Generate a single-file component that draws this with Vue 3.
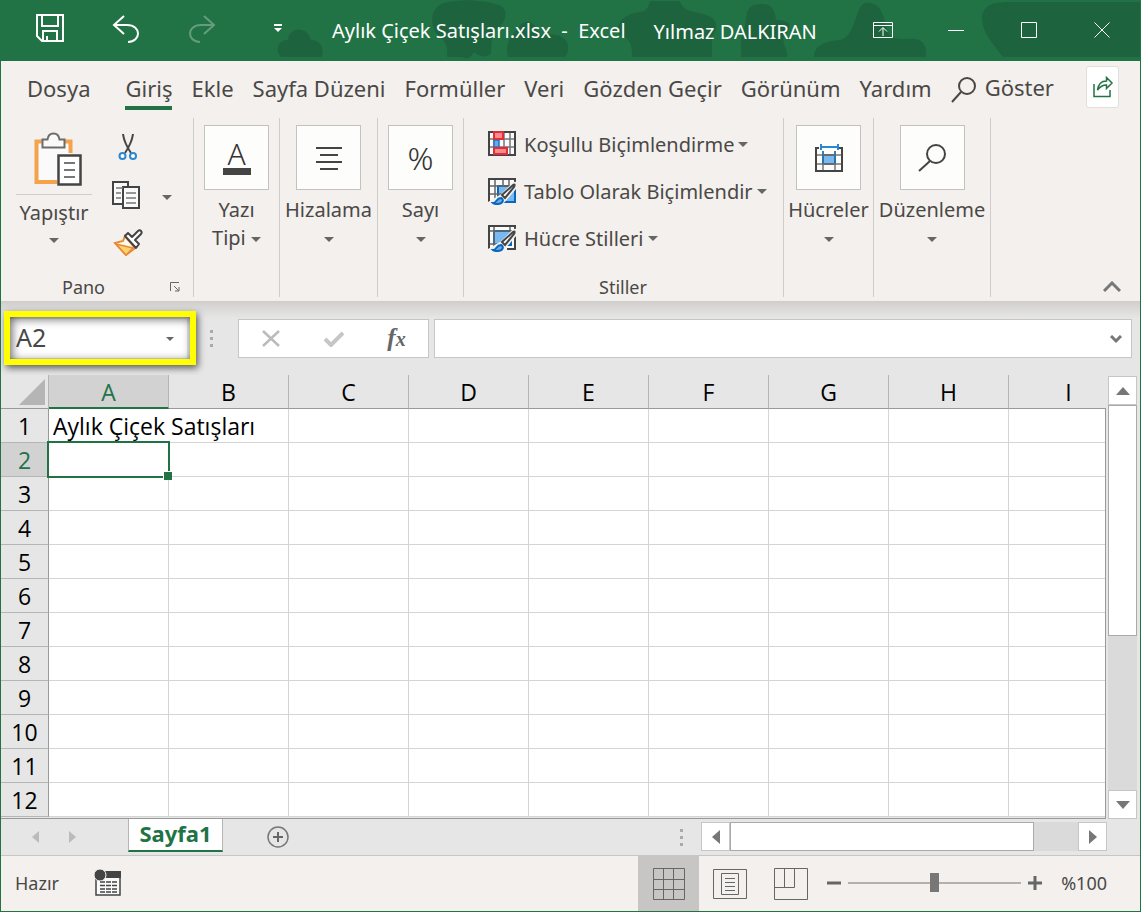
<script setup>
import { ref } from 'vue'

const tabs = ['Dosya', 'Giriş', 'Ekle', 'Sayfa Düzeni', 'Formüller', 'Veri', 'Gözden Geçir', 'Görünüm', 'Yardım']
const activeTab = ref('Giriş')
const columns = ['A', 'B', 'C', 'D', 'E', 'F', 'G', 'H', 'I']
const rows = Array.from({ length: 12 }, (_, i) => i + 1)
const cells = { A1: 'Aylık Çiçek Satışları' }
const selectedColumn = ref('A')
const selectedRow = ref(2)
const formula = ref('')
const zoom = ref(100)

function select(column, row) {
  selectedColumn.value = column
  selectedRow.value = row
}
</script>

<template>
  <div class="window">
    <header class="titlebar">
      <svg class="pattern" width="1141" height="61" viewBox="0 0 1141 61" aria-hidden="true">
        <path d="M281 57c-6-6-4-17 7-17 1-14 20-14 23 0 11 0 14 11 10 17zM447 57c1-9-1-15-8-21-8-6-12-27 5-33 15-5 45-3 57 3 8 5 4 17-3 22-8 7-6 18-7 25-4 6-13 3-17-1-3 6-7 8-12 5zM508 57c-3-11 1-21 10-28 4-11 18-10 21 6 13-2 30 0 29 13 0 4-1 7-3 9zM632 57c0-12-1-17-10-21-10-5-3-21 17-24 6 0 9-3 11-11h30c3 11 14 10 26 14 12 4 13 12 6 22v20zM741 57c1-8-2-13 2-24 4-9 1-25 11-28 17-4 21 4 22 15 15 0 17 6 9 15-5 8 4 15 2 22zM814 57c0-12 12-16 26-17 16-3 15-34 25-37 16-2 19 13 22 27 4 12 13 8 29 9 10 2 11 12 10 18zM1003 57c-7-9-19-22-21-36-1-15 9-19 28-19h131v55z" />
      </svg>
      <nav class="quick" aria-label="Hızlı Erişim">
        <button aria-label="Kaydet"><svg width="30" height="30" viewBox="0 0 30 30"><path d="M2 2h26v26H7l-5-5zM7 2v11h16V2M8 28V18h14v10M12 23v5" /></svg></button>
        <button aria-label="Geri Al"><svg width="28" height="30" viewBox="0 0 28 30"><path d="M12 3 2 12l10 9M2 12h13c15 0 14 17 1 17" /></svg></button>
        <button class="faded" aria-label="Yinele"><svg width="28" height="30" viewBox="0 0 28 30"><path d="m16 3 10 9-10 9M26 12H13C-2 12-1 29 12 29" /></svg></button>
        <button aria-label="Özelleştir"><svg width="8" height="10" viewBox="0 0 8 10"><path d="M0 2h8" /><path class="solid" d="M0 5h8L4 9z" /></svg></button>
      </nav>
      <h1>Aylık Çiçek Satışları.xlsx&nbsp; -&nbsp; Excel</h1>
      <span class="user">Yılmaz DALKIRAN</span>
      <div class="controls">
        <button aria-label="Şerit Görüntüleme"><svg width="20" height="16" viewBox="0 0 20 16"><path d="M.5.5h19v15H.5zM.5 3.500h19M10 14V6M6 9.500l4-4 4 4" /></svg></button>
        <button aria-label="Simge Durumuna Küçült"><svg width="16" height="16" viewBox="0 0 16 16"><path d="M0 8.500h16" /></svg></button>
        <button aria-label="Ekranı Kapla"><svg width="16" height="16" viewBox="0 0 16 16"><path d="M.5.5h15v15H.5z" /></svg></button>
        <button aria-label="Kapat"><svg width="16" height="16" viewBox="0 0 16 16"><path d="m.5.5 15 15m0-15-15 15" /></svg></button>
      </div>
    </header>

    <nav class="tabs" aria-label="Şerit sekmeleri">
      <button v-for="tab in tabs" :key="tab" :class="{ active: tab === activeTab }" @click="activeTab = tab">{{ tab }}</button>
      <button class="tell"><svg width="26" height="28" viewBox="0 0 26 28"><circle cx="16" cy="10" r="8" /><path d="M10 16 1 26" /></svg>Göster</button>
      <button class="share" aria-label="Paylaş"><svg width="22" height="22" viewBox="0 0 22 22"><path d="M2 8v12.500h16V14M5.500 14c1-7 4-9 9-9V1.500L20 7l-5.500 5.500V9c-4 0-6 1-9 5z" /></svg></button>
    </nav>

    <section class="ribbon">
      <div class="group clipboard">
        <button class="paste">
          <svg width="60" height="56" viewBox="0 0 60 56">
            <path fill="#fafafa" d="M13 10h34v40H13z" /><path d="M19 10.500h-6.500V51H33M40 10.500h6.500V22" stroke="#f4a34c" stroke-width="4" fill="none" />
            <path d="M18.500 16.500V8.500h5c1-8 11-8 12 0h5v8z" stroke="#6e6c6a" stroke-width="2" fill="#fafafa" />
            <path d="M34.500 24.500h22v29h-22z" stroke="#444" stroke-width="2.500" fill="#fff" /><path d="M40 32h11M40 39h11M40 46h11" stroke="#777" stroke-width="2" />
          </svg>
          <span class="paste-label">Yapıştır</span><i class="caret"></i>
        </button>
        <div class="tools">
          <button aria-label="Kes"><svg width="20" height="30" viewBox="0 0 20 30"><path d="M5 2c1 8 4 13 8 19M15 2c-1 8-4 13-8 19" stroke="#444" stroke-width="2" fill="none" /><g fill="#fff" stroke="#2b88d0" stroke-width="2"><circle cx="4.500" cy="24" r="3" /><circle cx="15" cy="24" r="3" /></g></svg></button>
          <button class="copy" aria-label="Kopyala"><svg width="34" height="30" viewBox="0 0 34 30"><g fill="#fafafa" stroke="#444" stroke-width="2"><path d="M12 24H2V2h15v5" /><path d="M12 7h16v21H12z" /></g><path d="M5 8h7M5 13h5M5 18h5M15 13h10M15 18h10M15 23h10" stroke="#777" stroke-width="1.500" /></svg></button>
          <button aria-label="Biçim Boyacısı"><svg width="30" height="28" viewBox="0 0 30 28"><path d="m12 7 10 12-9 7L2 14l8-2z" fill="#fffaf0" stroke="#e98a38" stroke-width="2" /><path d="m3 15 17 4-7 7z" fill="#ffd36b" stroke="#e98a38" stroke-width="1.500" /><path d="m12 7 3-3 4 4 6-6c2-2 5 1 3 3l-6 6 4 4-3 4z" fill="#fff" stroke="#444" stroke-width="2" stroke-linejoin="round" /></svg></button>
        </div>
        <button class="more" aria-label="Kopyalama seçenekleri"><i class="caret"></i></button>
        <footer>Pano<button class="launcher" aria-label="Pano ayarları"><svg width="10" height="10" viewBox="0 0 10 10"><path d="M.5 9V.5H9M4 4l4.500 4.500M9 5v4H5" /></svg></button></footer>
      </div>

      <button class="group font"><span class="tile letter"><span>A</span></span><span>Yazı<br />Tipi <i class="caret"></i></span></button>
      <button class="group align"><span class="tile"><svg width="26" height="26" viewBox="0 0 26 26"><path d="M0 3h26M4 10h18M0 17h26M4 24h18" /></svg></span><span>Hizalama</span><span><i class="caret"></i></span></button>
      <button class="group number"><span class="tile percent">%</span><span>Sayı</span><span><i class="caret"></i></span></button>

      <div class="group styles">
        <button>
          <svg width="28" height="28" viewBox="0 0 28 28"><path fill="#fafafa" d="M1 1h26v23H1z" /><path d="M6 1v23M16 1v23M22 1v23M1 8h26M1 16h26" stroke="#777" stroke-width="1.500" /><path d="M1 1h26v23H1z" fill="none" stroke="#444" stroke-width="2" /><path d="M6 9h5v7H6z" fill="#64acec" stroke="#2673c0" stroke-width="1.500" /><path d="M6 1h9v7H6zM6 17h13v6H6z" fill="#ff8790" stroke="#df2f36" stroke-width="2" /></svg>
          Koşullu Biçimlendirme <i class="caret"></i>
        </button>
        <button>
          <svg width="28" height="28" viewBox="0 0 28 28"><path fill="#fafafa" d="M1 1h26v23H1z" /><path d="M10 8h17v16H10z" fill="#79b9f1" stroke="#0867bb" stroke-width="2" /><path d="M7 1v23M15 1v8M21 1v8M1 8h26M1 16h13" stroke="#666" stroke-width="1.500" /><path d="M1 25V1h26v6" fill="none" stroke="#444" stroke-width="2" /><path d="M14 18 26 6c2-1 3 1 1 3L17 21l-4 4-9-1z" fill="#fff" stroke="#f3f0ed" stroke-width="4" /><path d="M14 17 25 7c2-1 2 0 1 2L17 20z" fill="#fff" stroke="#444" stroke-width="2" /><path d="M5 25c4 0 3-5 8-5 4 2 1 6-3 6-2 0-4 0-5-1z" fill="#64acec" stroke="#0867bb" stroke-width="2" /></svg>
          Tablo Olarak Biçimlendir <i class="caret"></i>
        </button>
        <button>
          <svg width="28" height="28" viewBox="0 0 28 28"><path fill="#fafafa" d="M1 1h26v23H1z" /><path d="M6 6h17v14H6z" fill="#79b9f1" stroke="#0867bb" stroke-width="2" /><path d="M6 1v23M22 1v5M1 6h26M1 19h10" stroke="#666" stroke-width="1.500" /><path d="M1 25V1h26v23H19" fill="none" stroke="#444" stroke-width="2" /><path d="M14 18 26 6c2-1 3 1 1 3L17 21l-4 4-9-1z" fill="#fff" stroke="#f3f0ed" stroke-width="4" /><path d="M14 17 25 7c2-1 2 0 1 2L17 20z" fill="#fff" stroke="#444" stroke-width="2" /><path d="M5 25c4 0 3-5 8-5 4 2 1 6-3 6-2 0-4 0-5-1z" fill="#64acec" stroke="#0867bb" stroke-width="2" /></svg>
          Hücre Stilleri <i class="caret"></i>
        </button>
        <footer>Stiller</footer>
      </div>

      <button class="group cellgroup"><span class="tile"><svg width="28" height="28" viewBox="0 0 28 28"><path d="M8 11h12v9H8z" fill="#79b9f1" /><path d="M1 11h26M1 20h26" stroke="#777" stroke-width="1.500" /><path d="M8 7v20M20 7v20" stroke="#777" stroke-width="1.500" /><path d="M8 7v13M20 7v13" stroke="#1d75bd" stroke-width="1.500" /><path d="M4 4H1v23h26V4h-3" stroke-width="2" /><path d="M6 3h17M6 0v6M23 0v6" stroke="#2b88d0" stroke-width="2" /></svg></span><span>Hücreler</span><span><i class="caret"></i></span></button>
      <button class="group editing"><span class="tile"><svg width="28" height="28" viewBox="0 0 28 28"><circle cx="18" cy="10" r="9" /><path d="M12 17 1 27" /></svg></span><span>Düzenleme</span><span><i class="caret"></i></span></button>
      <button class="collapse" aria-label="Şeridi Daralt"><svg width="18" height="12" viewBox="0 0 18 12"><path d="m1 10 8-8 8 8" /></svg></button>
    </section>

    <section class="formula-bar">
      <div class="namebox">
        <input :value="selectedColumn + selectedRow" aria-label="Ad Kutusu" readonly />
        <button aria-label="Adlar"><i class="caret small"></i></button>
        <div class="highlight"></div>
      </div>
      <div class="dots"><i></i><i></i><i></i></div>
      <div class="entry">
        <button aria-label="İptal"><svg width="18" height="17" viewBox="0 0 18 17"><path d="m1 1 16 15m0-15L1 16" stroke="#bbb" stroke-width="2.500" /></svg></button>
        <button aria-label="Gir"><svg width="20" height="16" viewBox="0 0 20 16"><path d="m1 8 6 6L19 2" stroke="#c6c6c6" stroke-width="4" /></svg></button>
        <button class="fx" aria-label="İşlev Ekle">f<small>x</small></button>
      </div>
      <div class="formula">
        <input v-model="formula" aria-label="Formül Çubuğu" />
        <button aria-label="Formül çubuğunu genişlet"><svg width="12" height="9" viewBox="0 0 12 9"><path d="m1 1 5 5 5-5" stroke="#777" stroke-width="3" /></svg></button>
      </div>
    </section>

    <main class="workspace">
      <div class="sheet">
        <table>
          <colgroup><col class="row-col" /><col v-for="c in columns" :key="c" /></colgroup>
          <thead>
            <tr>
              <th class="corner"><svg width="26" height="26" viewBox="0 0 26 26"><path d="M26 0v26H0z" fill="#b5b5b5" /></svg></th>
              <th v-for="c in columns" :key="c" scope="col" :class="{ current: c === selectedColumn }">{{ c }}</th>
            </tr>
          </thead>
          <tbody>
            <tr v-for="r in rows" :key="r">
              <th scope="row" :class="{ current: r === selectedRow }">{{ r }}</th>
              <td v-for="c in columns" :key="c" :class="{ spill: cells[c + r] }" @click="select(c, r)">
                {{ cells[c + r] }}
                <div v-if="c === selectedColumn && r === selectedRow" class="selection"></div>
              </td>
            </tr>
          </tbody>
        </table>
      </div>
      <div class="vscroll">
        <button aria-label="Yukarı"><svg width="14" height="8" viewBox="0 0 14 8"><path d="M0 8h14L7 0z" fill="#777" /></svg></button>
        <div class="vthumb"></div>
        <button aria-label="Aşağı"><svg width="14" height="8" viewBox="0 0 14 8"><path d="M0 0h14L7 8z" fill="#777" /></svg></button>
      </div>
    </main>

    <section class="sheetbar">
      <div class="sheet-nav">
        <button aria-label="Önceki sayfa"><svg width="7" height="12" viewBox="0 0 7 12"><path d="M7 0v12L0 6z" fill="#bbb" /></svg></button>
        <button aria-label="Sonraki sayfa"><svg width="7" height="12" viewBox="0 0 7 12"><path d="M0 0v12l7-6z" fill="#bbb" /></svg></button>
      </div>
      <button class="sheet-tab">Sayfa1</button>
      <button class="add" aria-label="Yeni sayfa"><svg width="24" height="24" viewBox="0 0 24 24"><circle cx="12" cy="12" r="10" stroke="#777" stroke-width="1.500" /><path d="M12 7v10M7 12h10" stroke="#666" stroke-width="2" /></svg></button>
      <div class="dots"><i></i><i></i><i></i></div>
      <div class="hscroll">
        <button aria-label="Sola"><svg width="8" height="14" viewBox="0 0 8 14"><path d="M8 0v14L0 7z" fill="#777" /></svg></button>
        <div class="hthumb"></div>
        <button aria-label="Sağa"><svg width="8" height="14" viewBox="0 0 8 14"><path d="M0 0v14l8-7z" fill="#777" /></svg></button>
      </div>
    </section>

    <footer class="status">
      <span class="ready">Hazır</span>
      <button class="macro" aria-label="Makro kaydet"><svg width="28" height="28" viewBox="0 0 28 28"><path d="M2 8v18h24V3H9" fill="#fafafa" stroke="#444" stroke-width="1.500" /><path d="M12 2h15v7H12z" fill="#444" /><circle cx="6" cy="6" r="6" fill="#444" stroke="#f3f0ed" /><path d="M6 13h17M6 16.500h17M6 20h17M6 23h17" stroke="#444" stroke-width="1.500" stroke-dasharray="5 1" /></svg></button>
      <div class="views">
        <button class="chosen" aria-label="Normal"><svg width="32" height="32" viewBox="0 0 32 32"><path d="M.5.5h31v31H.5zM10.500 0v32M20.500 0v32M0 11.500h32M0 21.500h32" /></svg></button>
        <button aria-label="Sayfa Düzeni"><svg width="34" height="30" viewBox="0 0 34 30"><path d="M.5.5h33v29H.5zM8.500 4.500h17v21h-17zM12 9.500h10M12 13.500h10M12 17.500h10M12 21.500h10" /></svg></button>
        <button aria-label="Sayfa Sonu Önizleme"><svg width="34" height="32" viewBox="0 0 34 32"><path d="M.5.5h33v31H.5zM.5 19.500h20V.5M10.500.5v19" /></svg></button>
      </div>
      <button class="step out" aria-label="Uzaklaştır"><svg width="14" height="14" viewBox="0 0 14 14"><path d="M0 7h14" /></svg></button>
      <input v-model="zoom" type="range" min="0" max="200" aria-label="Yakınlaştırma" />
      <button class="step" aria-label="Yakınlaştır"><svg width="14" height="14" viewBox="0 0 14 14"><path d="M0 7h14M7 0v14" /></svg></button>
      <output>%{{ zoom }}</output>
    </footer>
  </div>
</template>

<style>
body {
  margin: 0;
}
</style>

<style scoped>
* {
  box-sizing: border-box;
}
.window {
  display: flex;
  flex-direction: column;
  min-height: 100vh;
  border: 1px solid #217346;
  border-top: 0;
  overflow: hidden;
  background: #e6e6e6;
  color: #4a4846;
  font: 20px/28px "Noto Sans", "Open Sans", sans-serif;
}
button,
input {
  margin: 0;
  padding: 0;
  border: 0;
  background: none;
  color: inherit;
  font: inherit;
}
svg {
  display: block;
  flex: none;
  fill: none;
}
.titlebar {
  position: relative;
  display: flex;
  align-items: center;
  height: 61px;
  padding: 0 2px 0 11px;
  background: #217346;
  color: #fff;
}
.pattern {
  position: absolute;
  top: 0;
  right: -1px;
  fill: #1d643e;
}
.titlebar > :not(.pattern) {
  position: relative;
}
.titlebar button svg {
  stroke: #fff;
}
.quick,
.controls {
  display: flex;
}
.quick button,
.controls button {
  display: grid;
  place-items: center;
  height: 61px;
}
.quick button {
  width: 76px;
  padding-bottom: 6px;
}
.quick svg {
  stroke-width: 2;
}
.quick .faded {
  opacity: 0.3;
}
.titlebar .solid {
  fill: #fff;
  stroke: none;
}
.controls {
  margin-left: auto;
}
.controls button {
  width: 73px;
  padding-bottom: 2px;
}
h1 {
  margin: 0 0 0 16px;
  font-size: 20px;
  font-weight: 400;
  white-space: nowrap;
}
.user {
  margin-left: 28px;
  padding-top: 3px;
  white-space: nowrap;
}
.tabs {
  display: flex;
  gap: 19px;
  height: 54px;
  padding: 5px 21px 0 26px;
  background: #f3f0ed;
  font-size: 22px;
}
.tabs button {
  height: 44px;
  padding-top: 4px;
  border-bottom: 4px solid transparent;
  white-space: nowrap;
}
.tabs button:first-child {
  margin-right: 16px;
}
.tabs .active {
  border-color: #217346;
}
.tabs .tell {
  display: flex;
  align-items: center;
  gap: 8px;
  padding-top: 2px;
}
.tell svg {
  margin-top: 5px;
  stroke: #4a4846;
  stroke-width: 2;
}
.tabs .share {
  display: grid;
  place-items: center;
  width: 33px;
  height: 42px;
  margin-left: auto;
  padding: 0;
  border: 1px solid #e1dfdd;
  border-radius: 3px;
  background: #fff;
}
.share svg {
  stroke: #217346;
  stroke-width: 1.5;
}
.ribbon {
  display: flex;
  height: 187px;
  padding: 3px 0 4px;
  border-bottom: 1px solid #d0cecc;
  background: #f3f0ed;
}
.group {
  position: relative;
  display: flex;
  flex: none;
  flex-direction: column;
  align-items: center;
  padding-top: 7px;
  border-right: 1px solid #cfcdcb;
  white-space: nowrap;
}
.caret {
  display: inline-block;
  border: 5px solid transparent;
  border-top-color: #666;
  border-bottom: 0;
  vertical-align: middle;
}
.tile {
  display: grid;
  place-items: center;
  width: 65px;
  height: 65px;
  margin-bottom: 6px;
  border: 1px solid #c4c2c0;
  background: #fdfdfb;
}
.tile svg {
  stroke: #444;
  stroke-width: 2;
}
.letter {
  font-size: 30px;
}
.letter span {
  width: 28px;
  border-bottom: 7px solid #444;
  line-height: 28px;
}
.percent {
  font-size: 32px;
}
.letter,
.percent {
  color: #333;
  font-weight: 300;
}
.clipboard {
  display: grid;
  grid-template-columns: 106px 42px 36px;
  grid-template-rows: 1fr 20px;
  align-items: start;
  width: 193px;
  padding-top: 0;
}
.paste {
  display: flex;
  flex-direction: column;
  align-items: center;
  padding-top: 13px;
}
.paste-label {
  width: 76px;
  margin: 7px 0 11px;
  padding-top: 4px;
  border-top: 1px solid #cfcdcb;
}
.tools {
  display: grid;
  grid-template-rows: 48px 48px 48px;
  padding-top: 5px;
}
.tools button {
  display: grid;
  place-items: center;
}
.more {
  height: 28px;
  margin-top: 64px;
}
.group footer {
  font-size: 18px;
  line-height: 20px;
}
.clipboard footer {
  grid-column: 1 / -1;
  display: flex;
  align-items: center;
  justify-content: space-between;
  padding: 0 5px 0 61px;
}
.launcher svg {
  stroke: #666;
}
.font {
  width: 86px;
}
.align {
  width: 98px;
}
.number {
  width: 86px;
}
.styles {
  width: 320px;
  align-items: flex-start;
  padding: 3px 0 0 24px;
}
.styles button {
  display: flex;
  align-items: center;
  gap: 8px;
  height: 47px;
}
.styles .caret {
  margin-left: -4px;
}
.styles footer {
  margin-top: auto;
  padding-left: 111px;
}
.cellgroup {
  width: 90px;
}
.editing {
  width: 117px;
}
.collapse {
  align-self: flex-end;
  margin: 0 19px 4px auto;
}
.collapse svg {
  stroke: #777;
  stroke-width: 3;
}
.formula-bar {
  display: flex;
  height: 73px;
  padding: 17px 8px 17px 7px;
  background: linear-gradient(#d2d0cf, #e6e6e6 16px);
}
.namebox {
  position: relative;
  display: flex;
  align-items: center;
  width: 179px;
  background: #fff;
}
.namebox input {
  flex: 1;
  min-width: 0;
  padding: 0 0 4px 8px;
  font-size: 25px;
}
.namebox button {
  width: 34px;
  padding-bottom: 2px;
}
.small {
  border-width: 4px;
  border-bottom: 0;
}
.highlight {
  position: absolute;
  inset: -8px -9px -7px -4px;
  border: 6px solid #ff0;
  box-shadow: 2px 3px 7px #0009, inset 2px 2px 10px #0009;
  pointer-events: none;
}
.dots {
  display: flex;
  flex-direction: column;
  justify-content: center;
  gap: 4px;
}
.dots i {
  width: 3px;
  height: 3px;
  background: #aaa;
}
.formula-bar .dots {
  width: 51px;
  padding-left: 23px;
}
.entry {
  display: flex;
  width: 191px;
  border: 1px solid #c6c6c6;
  background: #fff;
}
.entry button {
  flex: 1;
  display: grid;
  place-items: center;
}
.entry .fx {
  display: block;
  color: #666;
  font: italic bold 25px/34px "Liberation Serif", serif;
}
.fx small {
  font-size: 20px;
}
.formula {
  display: flex;
  flex: 1;
  margin-left: 5px;
  border: 1px solid #c6c6c6;
  background: #fff;
}
.formula input {
  flex: 1;
  min-width: 0;
  padding: 0 8px;
}
.formula button {
  display: grid;
  place-items: center;
  width: 30px;
  padding-top: 2px;
}
.workspace {
  display: flex;
  flex: 1;
  height: 444px;
}
.sheet {
  position: relative;
  flex: 1;
  min-width: 0;
  overflow: hidden;
  border-bottom: 1px solid #999;
}
.sheet::after {
  content: "";
  position: absolute;
  inset: 33px 0 0 auto;
  border-right: 1px solid #999;
}
table {
  width: 1128px;
  table-layout: fixed;
  border-spacing: 0;
  color: #000;
  font: 23px/28px "Open Sans", "Noto Sans", sans-serif;
}
col {
  width: 120px;
}
.row-col {
  width: 48px;
}
th,
td {
  position: relative;
  height: 34px;
  padding: 0;
}
th {
  padding-top: 1px;
  border-right: 1px solid #999;
  border-bottom: 1px solid #b5b5b5;
  background: #e6e6e6;
  font-weight: 400;
}
thead th {
  border-right-color: #b5b5b5;
  border-bottom-color: #999;
}
th.current {
  background: #d2d2d2;
  color: #217346;
}
thead th.current {
  border-bottom: 2px solid #217346;
}
.corner svg {
  margin: 0 3px 0 auto;
}
td {
  padding: 1px 0 0 4px;
  border-right: 1px solid #d4d4d4;
  border-bottom: 1px solid #d4d4d4;
  background: #fff;
  white-space: nowrap;
}
.spill {
  z-index: 1;
  border-right-color: #fff;
}
.selection {
  position: absolute;
  inset: -2px;
  z-index: 2;
  border: 2px solid #217346;
}
.selection::after {
  content: "";
  position: absolute;
  right: -4px;
  bottom: -4px;
  width: 8px;
  height: 8px;
  border: 1px solid #fff;
  border-width: 1px 0 0 1px;
  background: #217346;
}
.vscroll {
  display: flex;
  flex-direction: column;
  width: 29px;
  margin: 1px 3px 0 2px;
  background: #dadada;
}
.vscroll button,
.hscroll button {
  display: grid;
  place-items: center;
  flex: none;
  width: 29px;
  height: 29px;
  border: 1px solid #c6c6c6;
  background: #fff;
}
.vthumb {
  height: 231px;
  margin-bottom: auto;
  border: 1px solid #aaa;
  background: #fff;
}
.sheetbar {
  display: flex;
  height: 37px;
  border-bottom: 1px solid #c6c6c6;
}
.sheet-nav {
  display: flex;
  width: 127px;
  padding-left: 16px;
}
.sheet-nav button {
  display: grid;
  place-items: center;
  width: 37px;
}
.sheet-tab {
  width: 95px;
  height: 33px;
  padding-bottom: 4px;
  border: 1px solid #b5b5b5;
  border-width: 0 1px 2px;
  border-bottom-color: #217346;
  background: #fff;
  color: #217346;
  font-size: 22px;
  font-weight: 700;
}
.add {
  margin-left: 43px;
}
.sheetbar .dots {
  margin: 0 18px 0 auto;
}
.hscroll {
  display: flex;
  flex: none;
  width: 406px;
  height: 29px;
  margin: 3px 33px 0 0;
  background: #dadada;
}
.hthumb {
  width: 304px;
  margin-right: auto;
  border: 1px solid #aaa;
  background: #fff;
}
.status {
  display: flex;
  align-items: center;
  height: 55px;
  padding: 0 33px 2px 0;
  background: #f3f0ed;
  font-size: 18px;
}
.ready {
  width: 93px;
  padding-left: 14px;
}
.views {
  display: flex;
  align-self: stretch;
  margin: 0 0 -2px auto;
}
.views button {
  display: grid;
  place-items: center;
  width: 61px;
}
.views .chosen {
  background: #c8c6c4;
}
.views svg {
  stroke: #666;
}
.step {
  margin: 0 10px;
}
.step.out {
  margin-left: 6px;
}
.step svg {
  stroke: #666;
  stroke-width: 3;
}
input[type="range"] {
  width: 173px;
  height: 20px;
  margin: 0 -3px;
  appearance: none;
}
input[type="range"]::-webkit-slider-runnable-track {
  height: 2px;
  background: #b3b0ad;
}
input[type="range"]::-webkit-slider-thumb {
  width: 9px;
  height: 19px;
  margin-top: -9px;
  appearance: none;
  background: #777;
}
output {
  width: 46px;
  margin-left: 9px;
  text-align: right;
}
</style>
